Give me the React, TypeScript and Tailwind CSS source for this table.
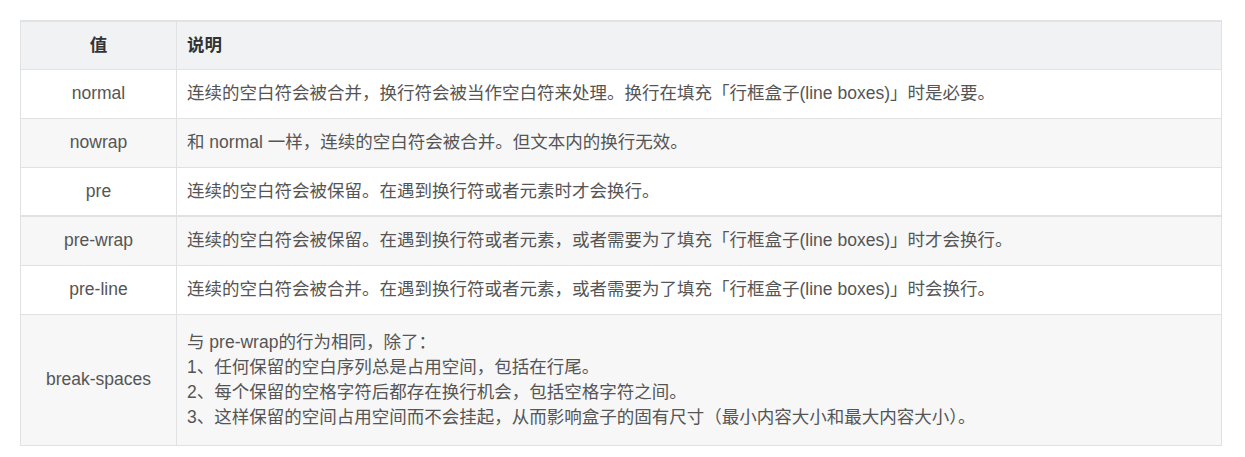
import React from 'react'

const rows: { value: string; desc: string[] }[] = [
  { value: 'normal', desc: ['连续的空白符会被合并，换行符会被当作空白符来处理。换行在填充「行框盒子(line boxes)」时是必要。'] },
  { value: 'nowrap', desc: ['和 normal 一样，连续的空白符会被合并。但文本内的换行无效。'] },
  { value: 'pre', desc: ['连续的空白符会被保留。在遇到换行符或者元素时才会换行。'] },
  { value: 'pre-wrap', desc: ['连续的空白符会被保留。在遇到换行符或者元素，或者需要为了填充「行框盒子(line boxes)」时才会换行。'] },
  { value: 'pre-line', desc: ['连续的空白符会被合并。在遇到换行符或者元素，或者需要为了填充「行框盒子(line boxes)」时会换行。'] },
  {
    value: 'break-spaces',
    desc: [
      '与 pre-wrap的行为相同，除了：',
      '1、任何保留的空白序列总是占用空间，包括在行尾。',
      '2、每个保留的空格字符后都存在换行机会，包括空格字符之间。',
      '3、这样保留的空间占用空间而不会挂起，从而影响盒子的固有尺寸（最小内容大小和最大内容大小）。',
    ],
  },
]

export default function App() {
  return (
    <div className="min-h-screen bg-white pt-5 pl-5">
      <table
        className="w-[1202px] border-collapse text-[17.5px] leading-[25px] text-[#555]"
        style={{ fontFamily: '"Liberation Sans", "Noto Sans CJK SC", sans-serif' }}
      >
        <thead>
          <tr className="bg-[#f0f2f3]">
            <th className="h-[48px] w-[156px] border border-t-2 border-[#e0e2e4] text-center font-bold text-[#333]">值</th>
            <th className="h-[48px] border border-t-2 border-[#e0e2e4] px-[10px] text-left font-bold text-[#333]">说明</th>
          </tr>
        </thead>
        <tbody>
          {rows.map((row, i) => {
            const gray = i % 2 === 1
            const last = row.desc.length > 1
            const thick = i === 2
            return (
              <tr key={row.value} className={gray ? 'bg-[#f7f7f7]' : 'bg-white'}>
                <td
                  className={`border border-[#dfe1e3] text-center ${thick ? 'border-b-2' : ''} ${last ? 'h-[131px]' : 'h-[49px]'}`}
                >
                  {row.value}
                </td>
                <td className={`border border-[#dfe1e3] px-[10px] ${thick ? 'border-b-2' : ''}`}>
                  {row.desc.map((line) => (
                    <div key={line}>{line}</div>
                  ))}
                </td>
              </tr>
            )
          })}
        </tbody>
      </table>
    </div>
  )
}
